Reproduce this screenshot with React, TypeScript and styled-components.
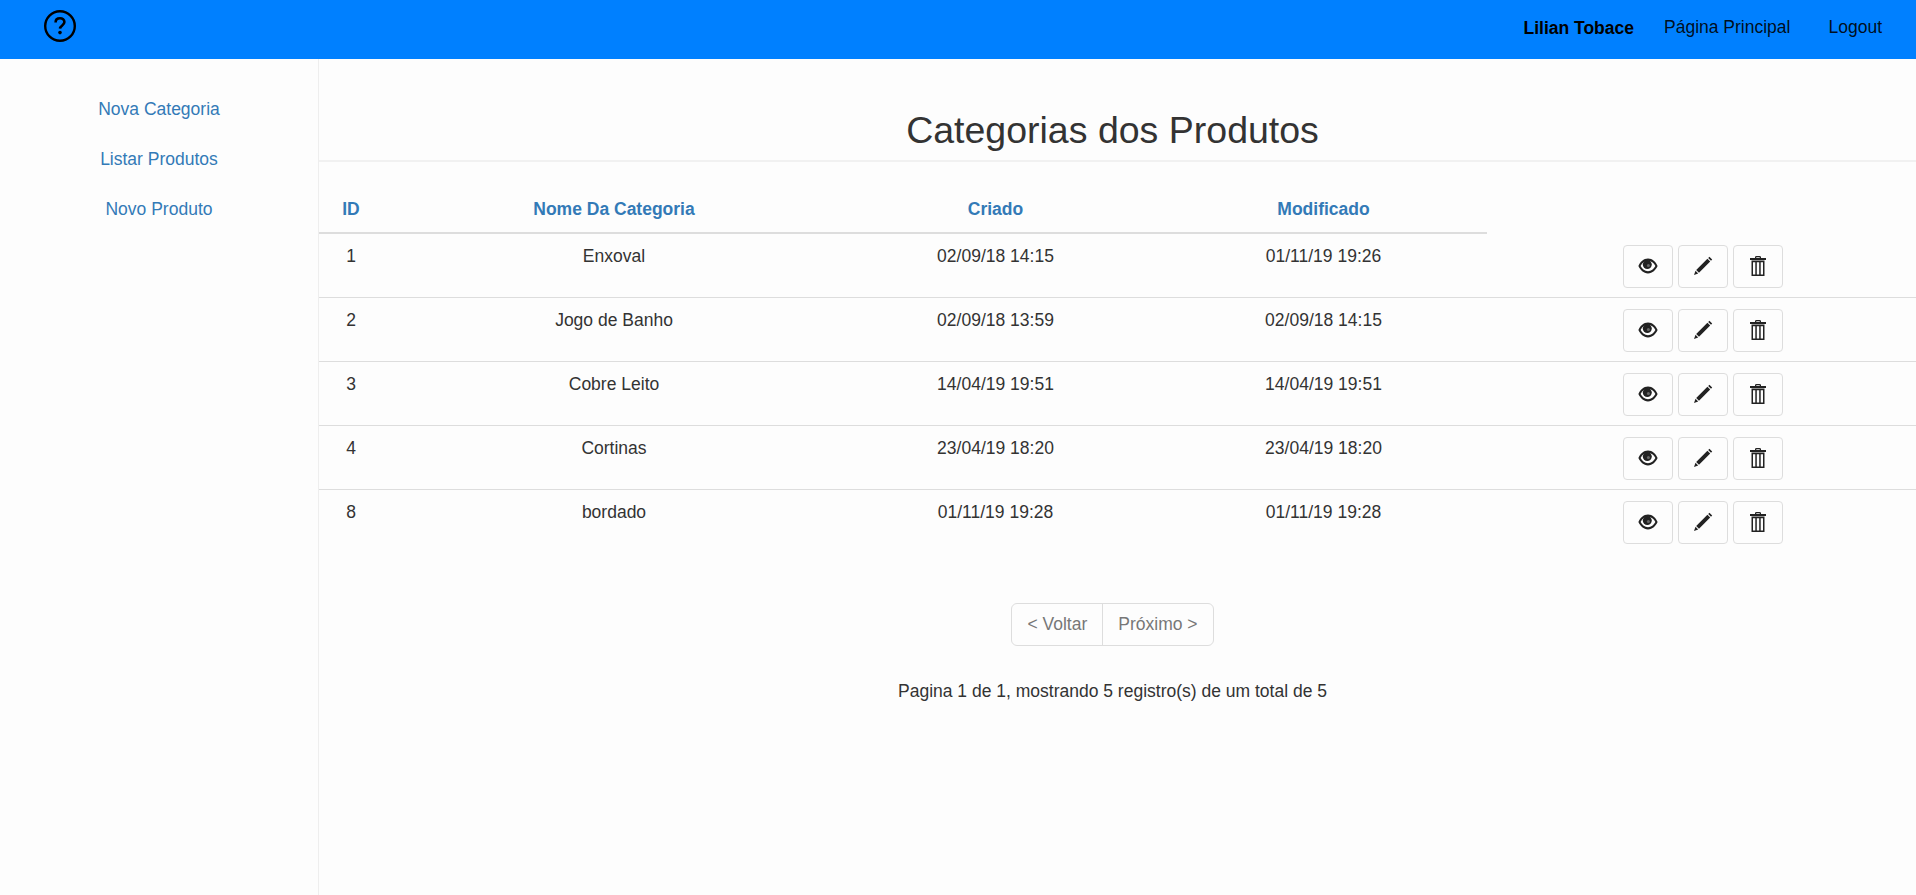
import React from 'react'
import styled, { createGlobalStyle } from 'styled-components'

const GlobalStyle = createGlobalStyle`
  * {
    box-sizing: border-box;
  }
  html, body {
    margin: 0;
    height: 100%;
    background: #fdfdfd;
    color: #333;
    font-family: 'Liberation Sans', Arial, sans-serif;
    font-size: 17.5px;
    line-height: 25px;
  }
`

const Page = styled.div`
  display: flex;
  flex-direction: column;
  height: 895px;
  overflow: hidden;
`

const Navbar = styled.nav`
  display: flex;
  align-items: center;
  justify-content: space-between;
  flex: 0 0 59px;
  padding: 0 34px 0 43px;
  background: #0080ff;
`

const HelpLink = styled.a`
  display: flex;
  margin-top: -8px;
  color: #000;
`

const NavRight = styled.div`
  display: flex;
  align-items: center;
  margin-top: -4px;
`

const NavUser = styled.strong`
  margin: 2px 30px 0 0;
  color: #000;
`

const NavLink = styled.a`
  margin-left: 38px;
  color: rgba(0, 0, 0, 0.9);

  &:first-of-type {
    margin-left: 0;
  }
`

const Body = styled.div`
  display: flex;
  flex: 1;
  min-height: 0;
`

const Sidebar = styled.aside`
  display: flex;
  flex-direction: column;
  flex: 0 0 319px;
  gap: 25px;
  padding: 38px 0 0 0;
  border-right: 1px solid #eee;
  text-align: center;
`

const SideLink = styled.a`
  color: #337ab7;
`

const Main = styled.main`
  flex: 1;
  min-width: 0;
`

const Title = styled.h1`
  margin: 0;
  padding: 51px 10px 10px 0;
  border-bottom: 2px solid #f1f1f1;
  font-size: 37.5px;
  font-weight: 500;
  line-height: 40px;
  text-align: center;
`

const Table = styled.table`
  width: 100%;
  margin-top: 27px;
  border-collapse: separate;
  border-spacing: 0;
  table-layout: fixed;
`

const HeadCell = styled.th<{ $narrow?: boolean }>`
  padding: 8px ${({ $narrow }) => ($narrow ? '14px' : '0')} 10px 0;
  border-bottom: 2px solid #ddd;
  color: #337ab7;
  font-weight: 700;
  text-align: center;
`

const Cell = styled.td<{ $narrow?: boolean }>`
  height: 64px;
  padding: 10px ${({ $narrow }) => ($narrow ? '14px' : '0')} 8px 0;
  border-bottom: 1px solid #ddd;
  text-align: center;
  vertical-align: top;
`

const Row = styled.tr`
  &:last-child td {
    border-bottom: 0;
  }
`

const ActionCell = styled(Cell)`
  padding: 11px 0 0;
`

const Actions = styled.div`
  display: flex;
  justify-content: center;
  gap: 5px;
  padding-left: 2px;
`

const IconButton = styled.button`
  display: flex;
  align-items: center;
  justify-content: center;
  width: 50px;
  height: 43px;
  padding: 0 0 2px;
  border: 1px solid #ddd;
  border-radius: 4px;
  background: #fdfdfd;
  color: #222;
`

const Pager = styled.div`
  display: flex;
  justify-content: center;
  margin-top: 49px;
  padding-right: 10px;
`

const PagerGroup = styled.div`
  display: flex;
  height: 43px;
  border: 1px solid #ddd;
  border-radius: 6px;
`

const PagerItem = styled.a`
  display: flex;
  align-items: center;
  padding: 0 15px;
  color: #777;

  & + & {
    border-left: 1px solid #ddd;
  }
`

const Summary = styled.p`
  margin: 33px 0 0;
  padding-right: 10px;
  text-align: center;
`

const HelpIcon = () => (
  <svg width="34" height="34" viewBox="0 0 34 34" fill="none" stroke="currentColor">
    <circle cx="17" cy="17" r="14.8" strokeWidth="2.4" />
    <path d="M12.6 13.4c0-2.6 1.900-4.100 4.400-4.100s4.400 1.500 4.400 3.800c0 3.400-4.200 3.200-4.400 6.600" strokeWidth="2.6" />
    <circle cx="17" cy="23.600" r="1.800" fill="currentColor" stroke="none" />
  </svg>
)

const EyeIcon = () => (
  <svg width="20" height="16" viewBox="0 0 20 16">
    <path
      fill="currentColor"
      fillRule="evenodd"
      d="M10 .6C5.500.6 2.200 4 .4 8c1.800 4 5.100 7.400 9.600 7.400s7.800-3.400 9.600-7.400C17.800 4 14.500.6 10 .6zM2.600 8C4.200 5 6.800 2.800 10 2.800S15.800 5 17.400 8c-1.600 3-4.200 5.200-7.400 5.200S4.200 11 2.600 8z"
    />
    <circle cx="9.300" cy="6.600" r="4.500" fill="currentColor" />
    <circle cx="10.400" cy="7.600" r="1.500" fill="#666" />
  </svg>
)

const PencilIcon = () => (
  <svg width="20" height="20" viewBox="0 0 20 20">
    <path fill="currentColor" d="M16.400.8l2.800 2.800-1.200 1.200-2.800-2.800zM14.400 2.800l2.800 2.800L6 16.800l-2.800-2.800zM2.500 14.800l2.700 2.700-4.200 1.500z" />
  </svg>
)

const TrashIcon = () => (
  <svg width="16" height="20" viewBox="0 0 16 20">
    <path
      fill="currentColor"
      fillRule="evenodd"
      d="M5 2V1.300Q5 0 6.500 0h3Q11 0 11 1.300V2h5v1.900H0V2zM6.300 1.200V2h3.400v-.8zM1.500 4.600h13V20h-13zM3 6.200V18.500h2.300V6.200zm3.800 0V18.500h2.400V6.200zm3.900 0V18.500H13V6.200z"
    />
  </svg>
)

const categories = [
  { id: 1, name: 'Enxoval', created: '02/09/18 14:15', modified: '01/11/19 19:26' },
  { id: 2, name: 'Jogo de Banho', created: '02/09/18 13:59', modified: '02/09/18 14:15' },
  { id: 3, name: 'Cobre Leito', created: '14/04/19 19:51', modified: '14/04/19 19:51' },
  { id: 4, name: 'Cortinas', created: '23/04/19 18:20', modified: '23/04/19 18:20' },
  { id: 8, name: 'bordado', created: '01/11/19 19:28', modified: '01/11/19 19:28' },
]

const App = () => (
  <Page>
    <GlobalStyle />
    <Navbar>
      <HelpLink>
        <HelpIcon />
      </HelpLink>
      <NavRight>
        <NavUser>Lilian Tobace</NavUser>
        <NavLink>Página Principal</NavLink>
        <NavLink>Logout</NavLink>
      </NavRight>
    </Navbar>
    <Body>
      <Sidebar>
        <SideLink>Nova Categoria</SideLink>
        <SideLink>Listar Produtos</SideLink>
        <SideLink>Novo Produto</SideLink>
      </Sidebar>
      <Main>
        <Title>Categorias dos Produtos</Title>
        <Table>
          <colgroup>
            <col width="78" />
            <col width="434" />
            <col width="329" />
            <col width="327" />
            <col />
          </colgroup>
          <thead>
            <tr>
              <HeadCell $narrow>ID</HeadCell>
              <HeadCell>Nome Da Categoria</HeadCell>
              <HeadCell>Criado</HeadCell>
              <HeadCell>Modificado</HeadCell>
            </tr>
          </thead>
          <tbody>
            {categories.map((category) => (
              <Row key={category.id}>
                <Cell $narrow>{category.id}</Cell>
                <Cell>{category.name}</Cell>
                <Cell>{category.created}</Cell>
                <Cell>{category.modified}</Cell>
                <ActionCell>
                  <Actions>
                    <IconButton aria-label="Ver">
                      <EyeIcon />
                    </IconButton>
                    <IconButton aria-label="Editar">
                      <PencilIcon />
                    </IconButton>
                    <IconButton aria-label="Excluir">
                      <TrashIcon />
                    </IconButton>
                  </Actions>
                </ActionCell>
              </Row>
            ))}
          </tbody>
        </Table>
        <Pager>
          <PagerGroup>
            <PagerItem>&lt; Voltar</PagerItem>
            <PagerItem>Próximo &gt;</PagerItem>
          </PagerGroup>
        </Pager>
        <Summary>Pagina 1 de 1, mostrando 5 registro(s) de um total de 5</Summary>
      </Main>
    </Body>
  </Page>
)

export default App
